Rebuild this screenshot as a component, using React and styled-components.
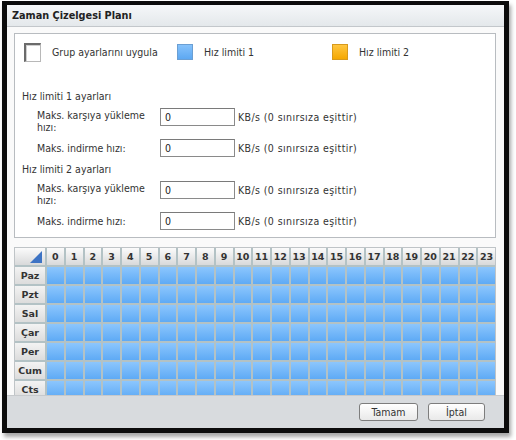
import React from "react";
import styled, { createGlobalStyle } from "styled-components";

const Global = createGlobalStyle`
  html, body { margin: 0; padding: 0; background: #ffffff; }
  body { width: 516px; height: 440px; overflow: hidden; font-family: "DejaVu Sans Condensed", "DejaVu Sans", sans-serif; }
  * { box-sizing: border-box; }
`;

const Frame = styled.div`
  margin: 1px 0 0 2px;
  width: 507px;
  height: 432px;
  border: 5px solid #0c0c0c;
  border-top-width: 4px;
  box-shadow: 2px 4px 4px rgba(0, 0, 0, 0.35);
  display: flex;
  flex-direction: column;
  background: #fafafa;
`;

const TitleBar = styled.div`
  height: 22px;
  flex: none;
  display: flex;
  align-items: center;
  padding-left: 5px;
  background: linear-gradient(#f5f7f9, #e4e8eb);
  border-bottom: 1px solid #c3c7cb;
  font-size: 10.8px;
  font-weight: bold;
  color: #222;
`;

const Content = styled.div`
  flex: 1;
  display: flex;
  flex-direction: column;
  gap: 9px;
  padding: 6px 8px 0 7px;
  overflow: hidden;
`;

const Panel = styled.div`
  background: #fff;
  border: 1px solid #b8bcc0;
  height: 205px;
  flex: none;
  padding: 8px 8px 0 8px;
  font-size: 10.5px;
  color: #333;
`;

const Legend = styled.div`
  display: grid;
  grid-template-columns: 153px 155px auto;
  align-items: center;
  height: 20px;
  margin-left: 1px;
`;

const LegendItem = styled.div`
  display: flex;
  align-items: center;
  gap: ${(p) => p.$gap || 11}px;
`;

const CheckBox = styled.div`
  width: 17px;
  height: 19px;
  background: #fff;
  border-top: 2px solid #6b6b6b;
  border-left: 2px solid #6b6b6b;
  border-right: 1px solid #b8b8b8;
  border-bottom: 1px solid #b8b8b8;
  box-shadow: inset 1px 1px 0 #cfcfcf;
`;

const Swatch = styled.div`
  width: 16px;
  height: 16px;
  border: 1px solid ${(p) => p.$border};
  background: ${(p) => p.$bg};
`;

const SectionLabel = styled.div`
  height: 14px;
  line-height: 14px;
  margin-top: ${(p) => p.$top}px;
  margin-left: -1px;
`;

const FormRow = styled.div`
  display: flex;
  align-items: flex-start;
  margin-top: ${(p) => p.$top}px;
  padding-left: 14px;
  min-height: 18px;
`;

const FieldLabel = styled.div`
  width: 123px;
  line-height: 12px;
  padding-top: ${(p) => (p.$single ? 3 : 1)}px;
`;

const Input = styled.div`
  width: 75px;
  height: 18px;
  border: 1px solid #8a8a8a;
  border-top-color: #7a7a7a;
  background: #fff;
  padding-left: 4px;
  line-height: 16px;
  color: #222;
`;

const Suffix = styled.div`
  margin-left: 3px;
  line-height: 18px;
  letter-spacing: 0.4px;
`;

const GridBox = styled.div`
  flex: none;
  height: 148px;
  overflow: hidden;
  border: 1px solid #bfc4c7;
  border-bottom: none;
  background: #fff;
`;

const Schedule = styled.div`
  display: grid;
  grid-template-columns: 30px repeat(24, 1fr);
  grid-auto-rows: 17px;
  gap: 2px;
  width: 480px;
  background: #b3c2c5;
  font-family: "DejaVu Sans", sans-serif;
  font-weight: bold;
  font-size: 9.5px;
  color: #333;
`;

const HeadCell = styled.div`
  background: linear-gradient(#fbfbfb, #d8d9da);
  display: flex;
  align-items: center;
  justify-content: center;
  position: relative;
`;

const Corner = styled(HeadCell)`
  &::after {
    content: "";
    position: absolute;
    right: 3px;
    bottom: 2px;
    width: 0;
    height: 0;
    border-left: 12px solid transparent;
    border-bottom: 12px solid #3d73c4;
  }
`;

const DayCell = styled.div`
  background: linear-gradient(#f3f3f3, #dcdcdc);
  display: flex;
  align-items: center;
  justify-content: center;
`;

const SlotCell = styled.div`
  background: linear-gradient(#8cc6fd, #5eaaf5);
`;

const Footer = styled.div`
  height: 33px;
  flex: none;
  background: #d8dbde;
  border-top: 1px solid #c6c9cc;
  display: flex;
  justify-content: flex-end;
  align-items: flex-start;
  gap: 10px;
  padding: 7px 19px 0 0;
`;

const Button = styled.button`
  width: ${(p) => p.$w}px;
  height: 18px;
  border: 1px solid #7d7d7d;
  border-radius: 3px;
  background: linear-gradient(#ffffff, #e9e9e9);
  font-family: "DejaVu Sans Condensed", "DejaVu Sans", sans-serif;
  font-size: 10.5px;
  color: #333;
  padding: 0;
`;

const days = ["Paz", "Pzt", "Sal", "Çar", "Per", "Cum", "Cts"];
const hours = Array.from({ length: 24 }, (_, i) => i);

const LimitSection = ({ title, top }) => (
  <>
    <SectionLabel $top={top}>{title}</SectionLabel>
    <FormRow $top={5}>
      <FieldLabel>Maks. karşıya yükleme<br />hızı:</FieldLabel>
      <Input>0</Input>
      <Suffix>KB/s (0 sınırsıza eşittir)</Suffix>
    </FormRow>
    <FormRow $top={6}>
      <FieldLabel $single>Maks. indirme hızı:</FieldLabel>
      <Input>0</Input>
      <Suffix>KB/s (0 sınırsıza eşittir)</Suffix>
    </FormRow>
  </>
);

export default function App() {
  return (
    <>
      <Global />
      <Frame>
        <TitleBar>Zaman Çizelgesi Planı</TitleBar>
        <Content>
          <Panel>
            <Legend>
              <LegendItem $gap={11}>
                <CheckBox />
                <span>Grup ayarlarını uygula</span>
              </LegendItem>
              <LegendItem>
                <Swatch $bg="linear-gradient(#86c2fb, #5da8f2)" $border="#6b9fd3" />
                <span>Hız limiti 1</span>
              </LegendItem>
              <LegendItem>
                <Swatch $bg="linear-gradient(#ffc640, #f5a800)" $border="#d79a1c" />
                <span>Hız limiti 2</span>
              </LegendItem>
            </Legend>
            <LimitSection title="Hız limiti 1 ayarları" top={27} />
            <LimitSection title="Hız limiti 2 ayarları" top={5} />
          </Panel>
          <GridBox>
            <Schedule>
              <Corner />
              {hours.map((h) => (
                <HeadCell key={h}>{h}</HeadCell>
              ))}
              {days.map((d) => (
                <React.Fragment key={d}>
                  <DayCell>{d}</DayCell>
                  {hours.map((h) => (
                    <SlotCell key={h} />
                  ))}
                </React.Fragment>
              ))}
            </Schedule>
          </GridBox>
        </Content>
        <Footer>
          <Button $w={59}>Tamam</Button>
          <Button $w={57}>İptal</Button>
        </Footer>
      </Frame>
    </>
  );
}
